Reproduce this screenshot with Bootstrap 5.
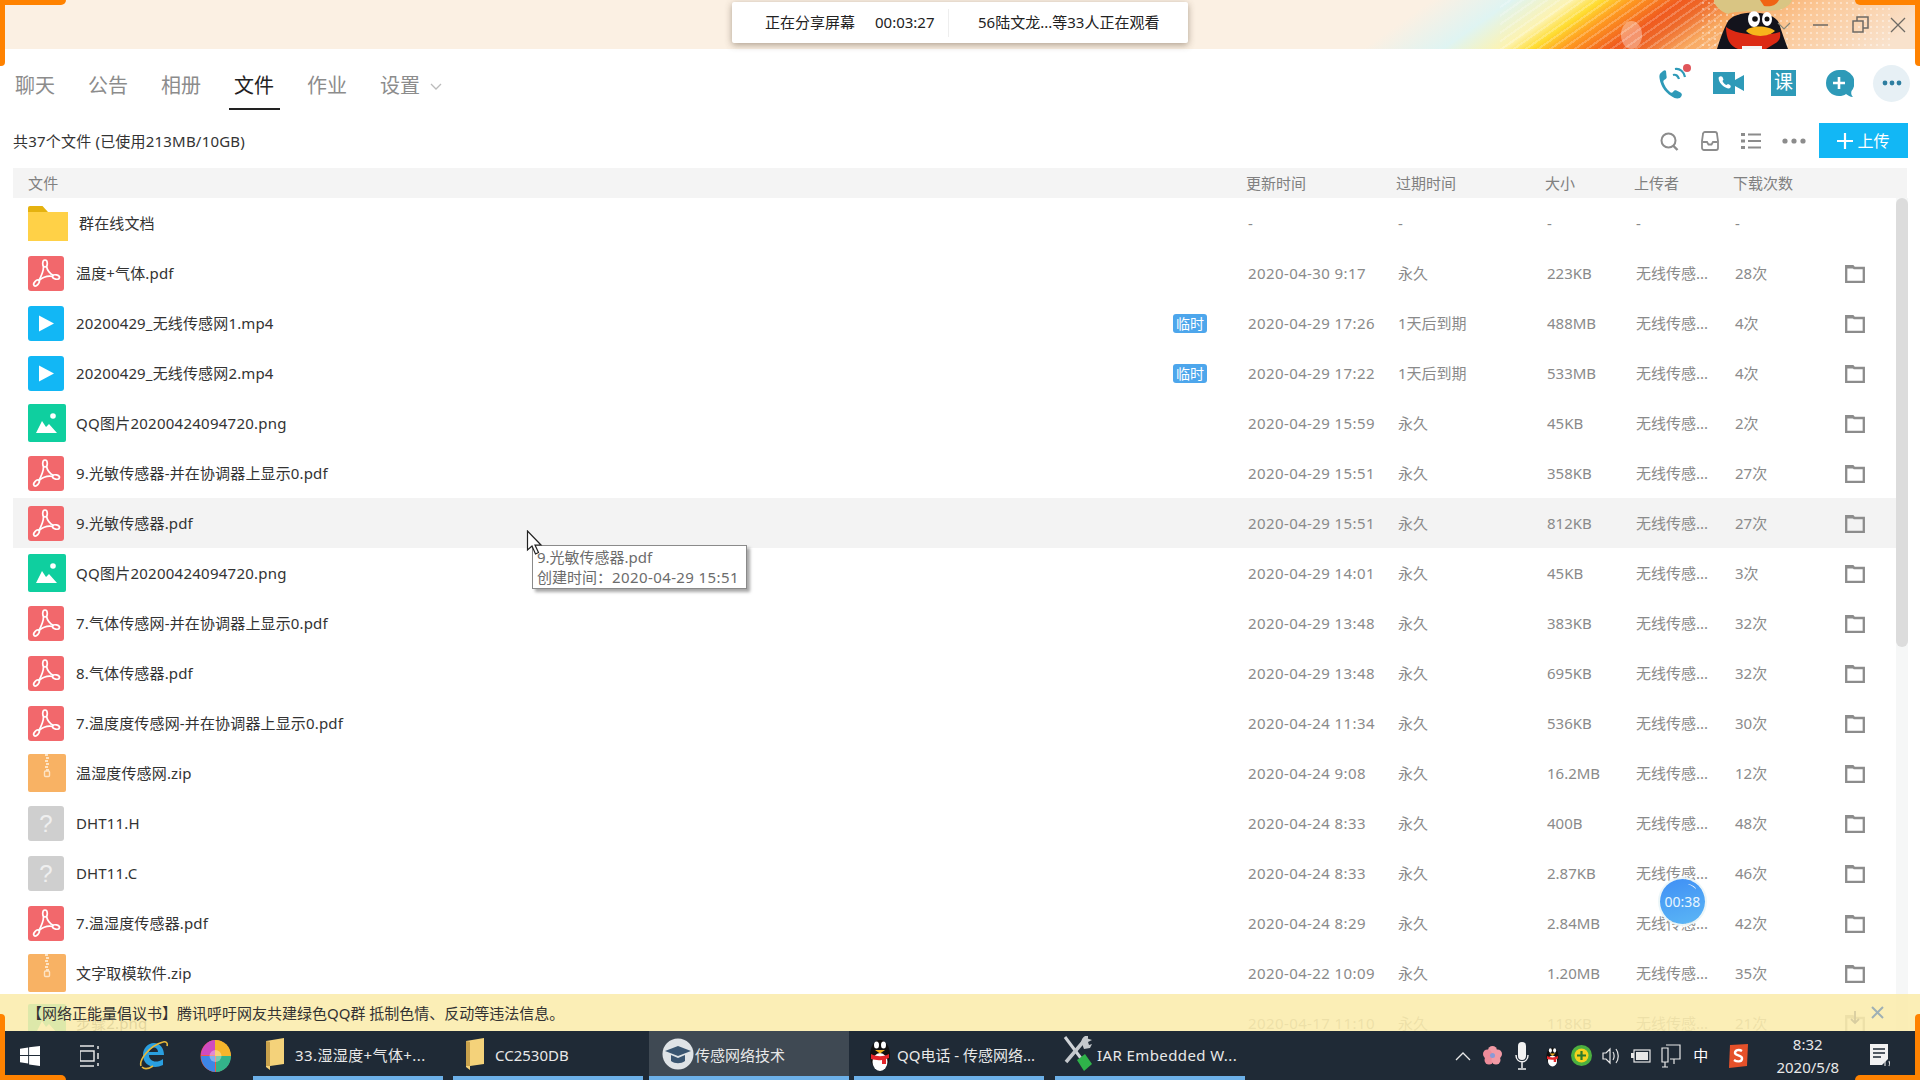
<!DOCTYPE html>
<html lang="zh-CN">
<head>
<meta charset="UTF-8">
<title>传感网络技术 - 文件</title>
<link href="https://cdn.jsdelivr.net/npm/bootstrap@5.3.0/dist/css/bootstrap.min.css" rel="stylesheet">
<style>
body { width: 1920px; height: 1080px; overflow: hidden; background: #fff; font-family: "Noto Sans", "Noto Sans CJK SC", sans-serif; font-size: 15px; color: #333; }
.app { position: relative; width: 1920px; height: 1080px; overflow: hidden; }

/* title strip */
.title-strip { flex: none; height: 49px; position: relative; padding-right: 14px; background: linear-gradient(145deg, #fbf0e3 0%, #fbf0e3 72%, #dff4f2 76%, #fdf3b0 79%, #ffdc30 80.5%, #ff9c20 82%, #f05a1e 84.5%, #ee6a2a 86%, #f8a860 88%, #fbc898 92%, #f9e2cc 98%); }
.strip-rays { position: absolute; left: 1500px; top: 0; width: 220px; height: 49px; background: repeating-linear-gradient(145deg, rgba(255,255,255,0) 0 5px, rgba(255,255,255,.22) 5px 7px); }
.strip-dots { position: absolute; left: 1700px; top: 0; width: 190px; height: 49px; background-image: radial-gradient(rgba(255,255,255,.4) 1px, transparent 1.6px); background-size: 6px 6px; }
.strip-flare { position: absolute; left: 1621px; top: 21px; width: 21px; height: 28px; border-radius: 50%; background: rgba(255,255,255,.35); }
.penguin { position: absolute; left: 1714px; top: 0; }
.win-ctrls { position: relative; }
.win-drop { margin-right: 22px; margin-top: 2px; }
.win-min { margin-right: 23px; }
.win-max { margin-right: 21px; }
.win-close { margin-top: 1px; }
.share-bar { position: absolute; left: 732px; top: 2px; width: 456px; height: 41px; background: #fff; border-radius: 2px; box-shadow: 0 2px 7px rgba(80,60,40,.45); color: #222; }
.share-txt1 { margin-left: 33px; width: 110px; }
.share-time { width: 73px; }
.share-sep { width: 1px; height: 28px; background: #eee; margin-right: 29px; }

/* tabs */
.tab-bar { flex: none; height: 61px; padding-left: 15px; padding-right: 10px; }
.tab-item { font-size: 20px; line-height: 28px; color: #8c8c8c; width: 40px; margin-right: 33px; padding-top: 23px; height: 61px; position: relative; white-space: nowrap; }
.tab-item.is-active { color: #222; }
.tab-item.is-active::after { content: ""; position: absolute; left: -5px; right: -6px; bottom: 0; height: 2px; background: #222; }
.tab-caret { margin-left: 10px; vertical-align: 2px; }
.top-actions { height: 61px; padding-top: 7px; }
.act-phone { margin-top: -4px; margin-right: 19px; }
.act-video { margin-right: 27px; }
.act-ke { width: 25px; height: 26px; background: #2e9ab8; color: #fff; font-size: 19px; line-height: 25px; text-align: center; margin-right: 30px; }
.act-plus { margin-right: 19px; margin-top: 2px; }
.act-more { width: 37px; height: 37px; border-radius: 50%; background: #e7f0f5; }

/* toolbar */
.tool-bar { flex: none; height: 58px; padding-left: 13px; padding-right: 12px; }
.count-txt { color: #333; margin-top: 4px; letter-spacing: .2px; }
.upload-btn { width: 89px; height: 35px; background: #12b7f5; color: #fff; border: 0; border-radius: 0; font-size: 16px; padding: 0; margin-top: 3px; margin-left: 13px; }
.upload-btn:hover { background: #12b7f5; color: #fff; }
.tool-ico { margin-top: 4px; margin-right: 21px; }
.tool-ico-last { margin-right: 0; }

/* file list */
.file-head { flex: none; margin-left: 13px; width: 1894px; height: 30px; background: #f4f4f4; color: #808080; padding-left: 15px; padding-right: 44px; }
.file-head .c-name { color: #808080; }
.file-list { height: 833px; overflow: hidden; flex: none; }
.file-rows { width: 1896px; }
.file-row { margin-left: 13px; width: 1883px; height: 50px; padding-left: 15px; padding-right: 31px; color: #8a8a8a; white-space: nowrap; }
.file-row.is-hover { background: #f3f3f3; }
.c-name { flex: 1 1 0; color: #333; letter-spacing: .15px; }
.c-date { width: 150px; letter-spacing: .4px; }
.file-head .c-date { letter-spacing: 0; }
.c-exp { width: 149px; }
.c-size { width: 89px; }
.c-up { width: 99px; }
.c-dl { width: 110px; }
.c-act { width: 20px; line-height: 0; }
.name-wide { letter-spacing: .25px; }
.file-ico { width: 36px; height: 35px; margin-right: 12px; flex: none; }
.file-ico-big { width: 38px; height: 38px; margin-right: 10px; flex: none; }
.dir-ico { width: 40px; height: 35px; margin-right: 11px; flex: none; }
.unk-ico { display: block; background: #cfcfcf; border-radius: 3px; color: #efefef; font-family: "Liberation Sans", sans-serif; font-size: 24px; line-height: 35px; text-align: center; }
.tmp-tag { background: #4da6ec; color: #fff; font-size: 14px; line-height: 19px; width: 34px; text-align: center; border-radius: 3px; margin-right: 41px; }
.scroll-track { width: 12px; height: 833px; background: #f6f7f7; }
.scroll-thumb { width: 12px; height: 449px; background: #dcdcdc; border-radius: 6px; }

/* things lying over the list */
.notice-bar { position: absolute; left: 0; top: 994px; width: 1920px; height: 37px; background: rgba(250,236,172,.88); padding-left: 27px; padding-right: 36px; padding-top: 2px; color: #333; }
.notice-down { margin-right: 11px; margin-top: 8px; }
.notice-x { margin-top: -3px; }
.timer-ball { position: absolute; left: 1660px; top: 879px; width: 45px; height: 45px; border-radius: 50%; background: linear-gradient(165deg, #3f8ff5 0%, #58b2f5 88%, #a4e0ee 97%); box-shadow: 0 0 0 2px rgba(235,245,248,.95); color: #e8f6ff; font-size: 14px; line-height: 45px; text-align: center; }
.timer-ball::after { content: ""; position: absolute; left: 27px; top: 6px; width: 9px; height: 5px; border-top: 1px solid rgba(255,255,255,.8); border-radius: 50%; transform: rotate(30deg); }
.file-tip { position: absolute; left: 532px; top: 545px; width: 215px; height: 44px; background: #fff; border: 1px solid #8a8a8a; box-shadow: 3px 3px 3px rgba(0,0,0,.35); color: #6c6c6c; line-height: 20px; padding-left: 4px; padding-top: 1px; white-space: nowrap; }
.tip-date { letter-spacing: .4px; }
.mouse-ptr { position: absolute; left: 526px; top: 530px; }
.edge-mark { position: absolute; background: #ff8200; }
.edge-tl-h { left: 0; top: 0; width: 66px; height: 5px; border-radius: 0 0 5px 0; }
.edge-tl-v { left: 0; top: 0; width: 5px; height: 66px; border-radius: 0 0 4px 0; }
.edge-tr-h { left: 1855px; top: 0; width: 65px; height: 5px; border-radius: 0 0 0 5px; }
.edge-tr-v { left: 1915px; top: 0; width: 5px; height: 66px; border-radius: 0 0 0 4px; }
.edge-bl-v { left: 0; top: 1014px; width: 5px; height: 66px; border-radius: 0 4px 0 0; }
.edge-bl-h { left: 0; top: 1075px; width: 66px; height: 5px; border-radius: 0 5px 0 0; }
.edge-br-v { left: 1915px; top: 1014px; width: 5px; height: 66px; border-radius: 4px 0 0 0; }
.edge-br-h { left: 1855px; top: 1075px; width: 65px; height: 5px; border-radius: 5px 0 0 0; }

/* taskbar */
.task-bar { flex: none; width: 1920px; height: 49px; padding-left: 20px; padding-right: 28px; background: #1f2a36; color: #e8e8e8; }
.tk-view { margin-left: 40px; }
.tk-ie { margin-left: 39px; }
.tk-pin { margin-left: 31px; margin-right: 22px; }
.task-item { width: 190px; height: 49px; border-bottom: 4px solid #6cb0e8; padding-left: 13px; white-space: nowrap; flex: none; }
.task-item.is-active { background: #3f4953; width: 200px; margin-left: 6px; margin-right: 5px; }
.tk-second { margin-left: 10px; }
.tk-last { margin-left: 11px; padding-left: 7px; }
.tk-folder { margin-right: 11px; flex: none; }
.tk-course { margin-right: 1px; flex: none; }
.tk-label { font-size: 15px; margin-top: 3px; }
.tk-wide { letter-spacing: .4px; }
.tray-cells { margin-left: 203px; }
.tray-cell { width: 29.75px; }
.tray-s { margin-left: 11px; }
.clock-box { width: 80px; margin-left: 19px; text-align: center; line-height: 23px; }
.tray-note { margin-left: 21px; }
.zh-mark { color: #fff; }
</style>
</head>
<body>
<svg width="0" height="0" class="position-absolute">
  <symbol id="i-pdf" viewBox="0 0 36 35"><rect width="36" height="35" rx="3" fill="#f2686c"/><g fill="none" stroke="#fff" stroke-width="1.700"><ellipse cx="17" cy="7.500" rx="2.300" ry="3.500"/><path d="M18.500 10.500C19.500 15 22.500 18 25.500 19.500"/><ellipse cx="28" cy="21" rx="3.500" ry="2.100" transform="rotate(12 28 21)"/><path d="M25 20.500C20 19.500 15 21 11 24.500"/><ellipse cx="8.500" cy="27" rx="2" ry="3.500" transform="rotate(42 8.500 27)"/><path d="M15.500 10.500C15.500 15 13.500 20 10.500 25"/></g></symbol>
  <symbol id="i-vid" viewBox="0 0 36 35"><rect width="36" height="35" rx="3" fill="#12b7f5"/><path d="M11 9.500v16l15-8z" fill="#fff"/></symbol>
  <symbol id="i-img" viewBox="0 0 38 38"><rect width="38" height="38" rx="2" fill="#0fcf9f"/><circle cx="25" cy="12" r="2.800" fill="#fff"/><path d="M8 29l6-12 4 6 3-3 8 9z" fill="#fff"/></symbol>
  <symbol id="i-zip" viewBox="0 0 38 38"><rect width="38" height="38" rx="2" fill="#f8b264"/><path d="M17 0h3v2h-3zM18 3h3v2h-3zM17 6h3v2h-3zM18 9h3v2h-3zM17 12h3v2h-3zM18 15h3v2h-3z" fill="#fde3c3"/><rect x="16.500" y="17" width="5" height="5.500" rx="1" fill="none" stroke="#fde3c3" stroke-width="1.400"/></symbol>
  <symbol id="i-dir" viewBox="0 0 40 35"><path d="M0 2a2 2 0 0 1 2-2h12.500l5.500 6h-20z" fill="#e5b20f"/><rect y="6" width="40" height="29" fill="#ffd147"/></symbol>
  <symbol id="i-open" viewBox="0 0 20 19"><path d="M1.200 4V2.200h6.600l1.500 1.800h9.500v13.800H1.200z" fill="none" stroke="#8c8c8c" stroke-width="2.300"/><path d="M1 1.500h6.500l1.500 3H1z" fill="#8c8c8c"/></symbol>
  <symbol id="i-tfolder" viewBox="0 0 18 32"><path d="M0 3l18-3v26l-14 2v4l-4-3z" fill="#f4d27a"/><path d="M0 3l4 1v24H0z" fill="#c9a24c"/></symbol>
  <symbol id="i-qq" viewBox="0 0 26 36"><ellipse cx="13" cy="19" rx="10" ry="15" fill="#111"/><ellipse cx="13" cy="26" rx="7.500" ry="9" fill="#fff"/><ellipse cx="9.500" cy="9" rx="2.500" ry="3.500" fill="#fff"/><ellipse cx="16.500" cy="9" rx="2.500" ry="3.500" fill="#fff"/><path d="M8 14h10l-5 3.500z" fill="#f5b01e"/><path d="M4 18c6 3 12 3 18 0v4l-3 1v5h-4v-4c-4 .5-7 0-11-1z" fill="#e5252a"/></symbol>
</svg>

<div class="app d-flex flex-column">
  <div class="title-strip d-flex align-items-center justify-content-end">
    <div class="strip-rays"></div>
    <div class="strip-dots"></div>
    <div class="strip-flare"></div>
    <svg class="penguin" width="80" height="49" viewBox="0 0 80 49">
      <path d="M3 49c3-10 6-18 10-26 6-14 46-14 52 0 3 10 6 18 9 26z" fill="#13131c"/>
      <path d="M12 27c10 8 38 10 54 5 1 6-1 10-6 12l-8 5H24c-8-3-12-10-12-22z" fill="#dc2a14"/>
      <path d="M28 49v-3h20v3z" fill="#f4f4f4"/>
      <path d="M32 31c4-6 22-6 29 0-6 6-22 7-29 0z" fill="#f7b51c"/>
      <ellipse cx="40" cy="19" rx="6" ry="8" fill="#fff"/>
      <ellipse cx="53" cy="19" rx="5" ry="7" fill="#fff"/>
      <circle cx="41" cy="19" r="2.800" fill="#111"/><circle cx="53" cy="19" r="2.500" fill="#111"/>
      <path d="M-1 0C2 8 8 12 14 14 22 10 50 12 65 10 72 8 77 4 78 0z" fill="#d9c583"/>
      <path d="M46 0l4 6c6 1 12 0 15-6z" fill="#f06414"/>
    </svg>
    <div class="win-ctrls d-flex align-items-center">
      <svg class="win-drop" width="14" height="10" viewBox="0 0 14 10"><path d="M1 2l6 6 6-6" fill="none" stroke="#887" stroke-width="1.200"/></svg>
      <svg class="win-min" width="16" height="16" viewBox="0 0 16 16"><path d="M0 8h15" stroke="#6e6a64" stroke-width="1.500"/></svg>
      <svg class="win-max" width="17" height="17" viewBox="0 0 17 17"><path d="M1 5h10v11H1zM5 5V1h11v11h-5" fill="none" stroke="#6e6a64" stroke-width="1.500"/></svg>
      <svg class="win-close" width="16" height="16" viewBox="0 0 16 16"><path d="M1 1l14 14M15 1L1 15" stroke="#6e6a64" stroke-width="1.300"/></svg>
    </div>
    <div class="share-bar d-flex align-items-center">
      <span class="share-txt1">正在分享屏幕</span>
      <span class="share-time">00:03:27</span>
      <span class="share-sep"></span>
      <span>56陆文龙...等33人正在观看</span>
    </div>
  </div>

  <div class="tab-bar d-flex">
    <div class="tab-item">聊天</div>
    <div class="tab-item">公告</div>
    <div class="tab-item">相册</div>
    <div class="tab-item is-active">文件</div>
    <div class="tab-item">作业</div>
    <div class="tab-item">设置<svg class="tab-caret" width="12" height="8" viewBox="0 0 12 8"><path d="M1 1l5 5 5-5" fill="none" stroke="#bbb" stroke-width="1.300"/></svg></div>
    <div class="top-actions ms-auto d-flex align-items-center">
      <svg class="act-phone" width="36" height="37" viewBox="0 0 36 37"><path d="M4 9c-2 1-3 3-2.500 6 1 9 7 16 15 20 3 1 6 .5 7-2 1-2 0-3-2-4l-3-1.500c-1.500-.5-2.500 0-3.500 1.500-1 1-2 1-3.500-.5-3-2.500-5-6-6-9-.5-1.500 0-2.500 1.500-3 1.500-1 2-2 1.500-3.500L8 8C7 6.500 5.500 7.500 4 9z" fill="#2e9ab8"/><path d="M15 12c3-1 5 1 6 4M17 6c5-1 9 3 10 8" fill="none" stroke="#2e9ab8" stroke-width="2.200"/><circle cx="29" cy="5" r="4" fill="#e0555a"/></svg>
      <svg class="act-video" width="31" height="22" viewBox="0 0 31 22"><path d="M0 0h22v8l9-5v16l-9-5v8H0z" fill="#2e9ab8"/><path d="M6 5c-1 1 0 5 3 8s7 4 8 3 1-2 0-3l-2-1-1.500 1c-1.500-.5-3.500-2.500-4-4l1-1.500-1-2.500c-1-1-2.500-1-3.500 0z" fill="#fff"/></svg>
      <div class="act-ke">课</div>
      <svg class="act-plus" width="28" height="28" viewBox="0 0 28 28"><path d="M13 0a13 13 0 1 0 0 26c3 0 5-.5 7-2 2 1.500 4 3 7 3-2-2-2-4-1.500-6A13 13 0 0 0 13 0z" fill="#2e9ab8"/><path d="M13 7v12M7 13h12" stroke="#fff" stroke-width="2.600"/></svg>
      <div class="act-more d-flex align-items-center justify-content-center"><svg width="20" height="6" viewBox="0 0 20 6"><circle cx="3" cy="3" r="2.400" fill="#2e7ea0"/><circle cx="10" cy="3" r="2.400" fill="#2e7ea0"/><circle cx="17" cy="3" r="2.400" fill="#2e7ea0"/></svg></div>
    </div>
  </div>

  <div class="tool-bar d-flex align-items-center">
    <div class="count-txt flex-grow-1">共37个文件 (已使用213MB/10GB)</div>
    <svg class="tool-ico" width="19" height="19" viewBox="0 0 19 19"><circle cx="8.500" cy="8.500" r="7" fill="none" stroke="#8c8c8c" stroke-width="2"/><path d="M13 13.500l4.500 4.500" stroke="#8c8c8c" stroke-width="2.400"/></svg>
    <svg class="tool-ico" width="20" height="20" viewBox="0 0 20 20"><path d="M2 10l1-7a2 2 0 0 1 2-2h10a2 2 0 0 1 2 2l1 7v7a2 2 0 0 1-2 2H4a2 2 0 0 1-2-2z" fill="none" stroke="#8c8c8c" stroke-width="1.800"/><path d="M2.500 11h4.500l1.500 2.500h3l1.500-2.500h4.500" fill="none" stroke="#8c8c8c" stroke-width="1.800"/></svg>
    <svg class="tool-ico" width="20" height="18" viewBox="0 0 20 18"><path d="M0 1h4v3H0zM0 7.500h4v3H0zM0 14h4v3H0z" fill="#8c8c8c"/><path d="M7 2.500h13M7 9h13M7 15.500h13" stroke="#8c8c8c" stroke-width="1.800"/></svg>
    <svg class="tool-ico tool-ico-last" width="24" height="6" viewBox="0 0 24 6"><circle cx="3" cy="3" r="2.600" fill="#8c8c8c"/><circle cx="12" cy="3" r="2.600" fill="#8c8c8c"/><circle cx="21" cy="3" r="2.600" fill="#8c8c8c"/></svg>
    <button class="btn upload-btn d-flex align-items-center justify-content-center gap-1" type="button"><svg width="16" height="16" viewBox="0 0 16 16"><path d="M8 0v16M0 8h16" stroke="#fff" stroke-width="2.200"/></svg><span>上传</span></button>
  </div>

  <div class="file-head d-flex align-items-center">
    <span class="c-name">文件</span><span class="c-date">更新时间</span><span class="c-exp">过期时间</span><span class="c-size">大小</span><span class="c-up">上传者</span><span class="c-dl">下载次数</span><span class="c-act"></span>
  </div>

  <div class="file-list d-flex">
    <div class="file-rows">
      <div class="file-row d-flex align-items-center"><svg class="dir-ico"><use href="#i-dir"/></svg><span class="c-name">群在线文档</span><span class="c-date">-</span><span class="c-exp">-</span><span class="c-size">-</span><span class="c-up">-</span><span class="c-dl">-</span><span class="c-act"></span></div>
      <div class="file-row d-flex align-items-center"><svg class="file-ico"><use href="#i-pdf"/></svg><span class="c-name">温度+气体.pdf</span><span class="c-date">2020-04-30 9:17</span><span class="c-exp">永久</span><span class="c-size">223KB</span><span class="c-up">无线传感...</span><span class="c-dl">28次</span><span class="c-act"><svg width="20" height="19"><use href="#i-open"/></svg></span></div>
      <div class="file-row d-flex align-items-center"><svg class="file-ico"><use href="#i-vid"/></svg><span class="c-name">20200429_无线传感网1.mp4</span><span class="tmp-tag">临时</span><span class="c-date">2020-04-29 17:26</span><span class="c-exp">1天后到期</span><span class="c-size">488MB</span><span class="c-up">无线传感...</span><span class="c-dl">4次</span><span class="c-act"><svg width="20" height="19"><use href="#i-open"/></svg></span></div>
      <div class="file-row d-flex align-items-center"><svg class="file-ico"><use href="#i-vid"/></svg><span class="c-name">20200429_无线传感网2.mp4</span><span class="tmp-tag">临时</span><span class="c-date">2020-04-29 17:22</span><span class="c-exp">1天后到期</span><span class="c-size">533MB</span><span class="c-up">无线传感...</span><span class="c-dl">4次</span><span class="c-act"><svg width="20" height="19"><use href="#i-open"/></svg></span></div>
      <div class="file-row d-flex align-items-center"><svg class="file-ico-big"><use href="#i-img"/></svg><span class="c-name name-wide">QQ图片20200424094720.png</span><span class="c-date">2020-04-29 15:59</span><span class="c-exp">永久</span><span class="c-size">45KB</span><span class="c-up">无线传感...</span><span class="c-dl">2次</span><span class="c-act"><svg width="20" height="19"><use href="#i-open"/></svg></span></div>
      <div class="file-row d-flex align-items-center"><svg class="file-ico"><use href="#i-pdf"/></svg><span class="c-name">9.光敏传感器-并在协调器上显示0.pdf</span><span class="c-date">2020-04-29 15:51</span><span class="c-exp">永久</span><span class="c-size">358KB</span><span class="c-up">无线传感...</span><span class="c-dl">27次</span><span class="c-act"><svg width="20" height="19"><use href="#i-open"/></svg></span></div>
      <div class="file-row is-hover d-flex align-items-center"><svg class="file-ico"><use href="#i-pdf"/></svg><span class="c-name">9.光敏传感器.pdf</span><span class="c-date">2020-04-29 15:51</span><span class="c-exp">永久</span><span class="c-size">812KB</span><span class="c-up">无线传感...</span><span class="c-dl">27次</span><span class="c-act"><svg width="20" height="19"><use href="#i-open"/></svg></span></div>
      <div class="file-row d-flex align-items-center"><svg class="file-ico-big"><use href="#i-img"/></svg><span class="c-name name-wide">QQ图片20200424094720.png</span><span class="c-date">2020-04-29 14:01</span><span class="c-exp">永久</span><span class="c-size">45KB</span><span class="c-up">无线传感...</span><span class="c-dl">3次</span><span class="c-act"><svg width="20" height="19"><use href="#i-open"/></svg></span></div>
      <div class="file-row d-flex align-items-center"><svg class="file-ico"><use href="#i-pdf"/></svg><span class="c-name">7.气体传感网-并在协调器上显示0.pdf</span><span class="c-date">2020-04-29 13:48</span><span class="c-exp">永久</span><span class="c-size">383KB</span><span class="c-up">无线传感...</span><span class="c-dl">32次</span><span class="c-act"><svg width="20" height="19"><use href="#i-open"/></svg></span></div>
      <div class="file-row d-flex align-items-center"><svg class="file-ico"><use href="#i-pdf"/></svg><span class="c-name">8.气体传感器.pdf</span><span class="c-date">2020-04-29 13:48</span><span class="c-exp">永久</span><span class="c-size">695KB</span><span class="c-up">无线传感...</span><span class="c-dl">32次</span><span class="c-act"><svg width="20" height="19"><use href="#i-open"/></svg></span></div>
      <div class="file-row d-flex align-items-center"><svg class="file-ico"><use href="#i-pdf"/></svg><span class="c-name">7.温度度传感网-并在协调器上显示0.pdf</span><span class="c-date">2020-04-24 11:34</span><span class="c-exp">永久</span><span class="c-size">536KB</span><span class="c-up">无线传感...</span><span class="c-dl">30次</span><span class="c-act"><svg width="20" height="19"><use href="#i-open"/></svg></span></div>
      <div class="file-row d-flex align-items-center"><svg class="file-ico-big"><use href="#i-zip"/></svg><span class="c-name">温湿度传感网.zip</span><span class="c-date">2020-04-24 9:08</span><span class="c-exp">永久</span><span class="c-size">16.2MB</span><span class="c-up">无线传感...</span><span class="c-dl">12次</span><span class="c-act"><svg width="20" height="19"><use href="#i-open"/></svg></span></div>
      <div class="file-row d-flex align-items-center"><span class="file-ico unk-ico">?</span><span class="c-name">DHT11.H</span><span class="c-date">2020-04-24 8:33</span><span class="c-exp">永久</span><span class="c-size">400B</span><span class="c-up">无线传感...</span><span class="c-dl">48次</span><span class="c-act"><svg width="20" height="19"><use href="#i-open"/></svg></span></div>
      <div class="file-row d-flex align-items-center"><span class="file-ico unk-ico">?</span><span class="c-name">DHT11.C</span><span class="c-date">2020-04-24 8:33</span><span class="c-exp">永久</span><span class="c-size">2.87KB</span><span class="c-up">无线传感...</span><span class="c-dl">46次</span><span class="c-act"><svg width="20" height="19"><use href="#i-open"/></svg></span></div>
      <div class="file-row d-flex align-items-center"><svg class="file-ico"><use href="#i-pdf"/></svg><span class="c-name">7.温湿度传感器.pdf</span><span class="c-date">2020-04-24 8:29</span><span class="c-exp">永久</span><span class="c-size">2.84MB</span><span class="c-up">无线传感...</span><span class="c-dl">42次</span><span class="c-act"><svg width="20" height="19"><use href="#i-open"/></svg></span></div>
      <div class="file-row d-flex align-items-center"><svg class="file-ico-big"><use href="#i-zip"/></svg><span class="c-name">文字取模软件.zip</span><span class="c-date">2020-04-22 10:09</span><span class="c-exp">永久</span><span class="c-size">1.20MB</span><span class="c-up">无线传感...</span><span class="c-dl">35次</span><span class="c-act"><svg width="20" height="19"><use href="#i-open"/></svg></span></div>
      <div class="file-row d-flex align-items-center"><svg class="file-ico-big"><use href="#i-img"/></svg><span class="c-name">步骤2.png</span><span class="c-date">2020-04-17 11:10</span><span class="c-exp">永久</span><span class="c-size">118KB</span><span class="c-up">无线传感...</span><span class="c-dl">21次</span><span class="c-act"><svg width="20" height="19"><use href="#i-open"/></svg></span></div>
    </div>
    <div class="scroll-track"><div class="scroll-thumb"></div></div>
  </div>

  <div class="task-bar d-flex align-items-center">
    <svg width="20" height="20" viewBox="0 0 22 22"><path d="M0 3l9-1.300V10H0zM10 1.500L22 0v10H10zM0 11h9v8.300L0 18zM10 11h12v11l-12-1.700z" fill="#fff"/></svg>
    <svg class="tk-view" width="20" height="24" viewBox="0 0 20 24"><path d="M0 2h14M0 22h14M0 7h14v10H0zM18 2v3M18 9v6M18 19v3" fill="none" stroke="#e8e8e8" stroke-width="1.500"/></svg>
    <svg class="tk-ie" width="30" height="32" viewBox="0 0 30 32"><path d="M4 15c0-7 5-12 11-12 6 0 10 5 10 12H10c0 6 7 9 14 4l0 6c-10 5-20 0-20-10zM10 12h9c0-6-8-6-9 0z" fill="#2a9fe0"/><path d="M2 26C0 20 10 6 24 2c3-1 5 1 4 4M3 27c3 3 8 1 11-1" fill="none" stroke="#e8b83a" stroke-width="1.600"/></svg>
    <svg class="tk-pin" width="31" height="34" viewBox="0 0 31 34"><ellipse cx="15.500" cy="17" rx="15" ry="16" fill="#ee5a4a"/><path d="M15 1a15 16 0 0 1 16 16H15z" fill="#f5b52c"/><path d="M31 17a15 16 0 0 1-15 16V17z" fill="#33b38a"/><path d="M15 33A15 16 0 0 1 1 17h14z" fill="#3d86e8"/><path d="M1 16A15 16 0 0 1 15 1v15z" fill="#d04ac0"/><circle cx="15.500" cy="17" r="6" fill="#fff" opacity=".35"/></svg>

    <div class="task-item d-flex align-items-center"><svg class="tk-folder" width="18" height="32"><use href="#i-tfolder"/></svg><span class="tk-label tk-wide">33.湿湿度+气体+...</span></div>
    <div class="task-item tk-second d-flex align-items-center"><svg class="tk-folder" width="18" height="32"><use href="#i-tfolder"/></svg><span class="tk-label">CC2530DB</span></div>
    <div class="task-item is-active d-flex align-items-center"><svg class="tk-course" width="32" height="32" viewBox="0 0 32 32"><circle cx="16" cy="16" r="15.500" fill="#dfe3e6"/><path d="M3 13l13-5 13 5-13 5z" fill="#3a5570"/><path d="M9 17v6c4 3 10 3 14 0v-6l-7 3z" fill="#3a5570"/></svg><span class="tk-label">传感网络技术</span></div>
    <div class="task-item d-flex align-items-center"><svg class="me-1 flex-shrink-0" width="26" height="36"><use href="#i-qq"/></svg><span class="tk-label">QQ电话 - 传感网络...</span></div>
    <div class="task-item tk-last d-flex align-items-center"><svg class="me-1 flex-shrink-0" width="31" height="36" viewBox="0 0 31 36"><path d="M3 1l21 28" stroke="#d0d4d8" stroke-width="3"/><path d="M26 1c-2 0-5 2-5 5l-17 20" stroke="#c4c8cc" stroke-width="3.500" fill="none"/><path d="M19 5l5-3 6 2-4 2 1 3 3-1-2 4-6 1z" fill="#c4c8cc"/><path d="M15 24l8-6 7 10-8 7z" fill="#2fb34a"/></svg><span class="tk-label tk-wide">IAR Embedded W...</span></div>

    <div class="tray-cells d-flex align-items-center">
      <div class="tray-cell d-flex justify-content-center"><svg width="16" height="10" viewBox="0 0 16 10"><path d="M1 9l7-7 7 7" fill="none" stroke="#e8e8e8" stroke-width="1.300"/></svg></div>
      <div class="tray-cell d-flex justify-content-center"><svg width="19" height="19" viewBox="0 0 19 19"><circle cx="9.500" cy="4.500" r="4.500" fill="#f29aa5"/><circle cx="4.500" cy="8" r="4.500" fill="#ee8c9a"/><circle cx="14.500" cy="8" r="4.500" fill="#f29aa5"/><circle cx="6" cy="14" r="4.500" fill="#ee8c9a"/><circle cx="13" cy="14" r="4.500" fill="#f29aa5"/><circle cx="9.500" cy="9.500" r="2.500" fill="#8a9ad8"/></svg></div>
      <div class="tray-cell d-flex justify-content-center"><svg width="14" height="28" viewBox="0 0 14 28"><rect x="3" width="8" height="18" rx="4" fill="#f2f2f2"/><path d="M1 13c0 9 12 9 12 0M7 20v6M3 27h8" fill="none" stroke="#f2f2f2" stroke-width="1.500"/></svg></div>
      <div class="tray-cell d-flex justify-content-center"><svg width="17" height="22"><use href="#i-qq"/></svg></div>
      <div class="tray-cell d-flex justify-content-center"><svg width="21" height="21" viewBox="0 0 21 21"><circle cx="10.500" cy="10.500" r="10.500" fill="#4cb040"/><circle cx="10.500" cy="10.500" r="7" fill="#f6d21e"/><path d="M10.500 6v9M6 10.500h9" stroke="#2c7a2c" stroke-width="2.200"/></svg></div>
      <div class="tray-cell d-flex justify-content-center"><svg width="19" height="20" viewBox="0 0 19 20"><path d="M1 7h3l4-4v14l-4-4H1zM11 6c1.500 2 1.500 6 0 8M14 3c3 4 3 10 0 14" fill="none" stroke="#e8e8e8" stroke-width="1.200"/></svg></div>
      <div class="tray-cell d-flex justify-content-center"><svg width="20" height="15" viewBox="0 0 20 15"><rect x="3" y="2" width="16" height="12" fill="none" stroke="#e8e8e8" stroke-width="1.200"/><rect x="5" y="4" width="12" height="8" fill="#e8e8e8"/><rect y="5" width="3" height="5" fill="#e8e8e8"/></svg></div>
      <div class="tray-cell d-flex justify-content-center"><svg width="20" height="24" viewBox="0 0 20 24"><path d="M5 1h14v14H9M1 4h6v14H1zM4 18v5M1 23h6M13 15v5" fill="none" stroke="#e8e8e8" stroke-width="1.200"/></svg></div>
      <div class="tray-cell text-center zh-mark">中</div>
    </div>
    <svg class="tray-s" width="22" height="24" viewBox="0 0 22 24"><path d="M3 1l18-1-1 22-18 2z" fill="#e5512a"/><path d="M15 7c-3-2-7-1-7 2s8 2 7 6c-.5 3-5 3-8 1" fill="none" stroke="#fff" stroke-width="2.400"/></svg>
    <div class="clock-box"><div>8:32</div><div>2020/5/8</div></div>
    <svg class="tray-note" width="23" height="24" viewBox="0 0 23 24"><path d="M1 0h18v15l-6 6H1z" fill="#f2f2f2"/><path d="M4 5h12M4 9h12M4 13h8" stroke="#1f2a36" stroke-width="1.500"/><path d="M16 17v5M20 17c1 2 1 3 0 5" fill="none" stroke="#e8e8e8" stroke-width="1.100"/></svg>
  </div>

  <div class="file-tip">9.光敏传感器.pdf<br>创建时间：<span class="tip-date">2020-04-29 15:51</span></div>
  <svg class="mouse-ptr" width="18" height="26" viewBox="0 0 18 26"><path d="M1.500 1v19l4.500-4 3.500 8 3-1.500-3.500-7.500h6z" fill="#fff" stroke="#222" stroke-width="1.200"/></svg>
  <div class="timer-ball">00:38</div>

  <div class="notice-bar d-flex align-items-center">
    <span class="flex-grow-1">【网络正能量倡议书】腾讯呼吁网友共建绿色QQ群 抵制色情、反动等违法信息。</span>
    <svg class="notice-down" width="10" height="14" viewBox="0 0 10 14"><path d="M5 0v11M1 8l4 4 4-4" fill="none" stroke="#d8cda0" stroke-width="1.800"/></svg>
    <svg class="notice-x" width="13" height="13" viewBox="0 0 13 13"><path d="M1 1l11 11M12 1L1 12" stroke="#9fb0b5" stroke-width="2"/></svg>
  </div>

  <div class="edge-mark edge-tl-h"></div>
  <div class="edge-mark edge-tl-v"></div>
  <div class="edge-mark edge-tr-h"></div>
  <div class="edge-mark edge-tr-v"></div>
  <div class="edge-mark edge-bl-v"></div>
  <div class="edge-mark edge-bl-h"></div>
  <div class="edge-mark edge-br-v"></div>
  <div class="edge-mark edge-br-h"></div>
</div>
</body>
</html>
